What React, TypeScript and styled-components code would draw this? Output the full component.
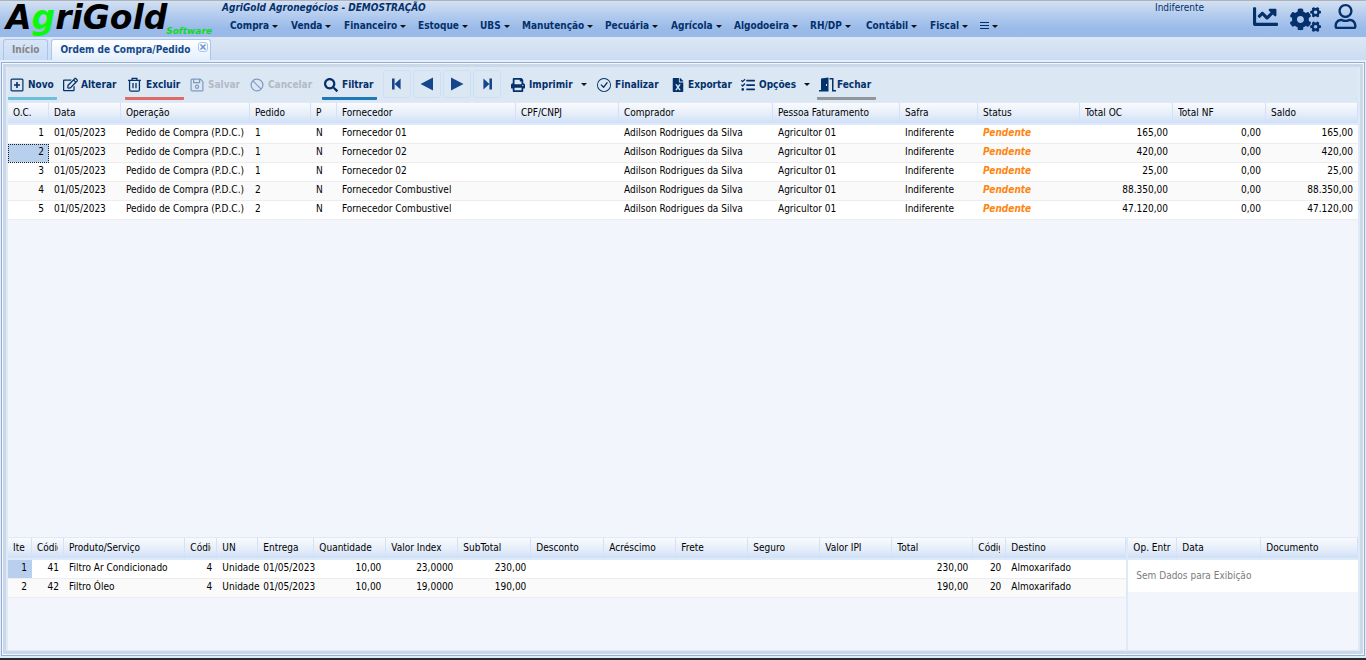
import React from "react";
import styled, { createGlobalStyle, css } from "styled-components";
import { FaChartLine, FaCogs, FaFileExcel, FaPrint, FaRegEdit, FaRegUser, FaSearch, FaTasks } from "react-icons/fa";
import { BsCheckCircle } from "react-icons/bs";

const navy = "#04306b";

const GlobalStyle = createGlobalStyle`
  * { box-sizing: border-box; }
  body {
    margin: 0;
    background: #deecfd;
    color: #000;
    font: 10px/14px "DejaVu Sans Condensed", "DejaVu Sans", Tahoma, sans-serif;
  }
  button { font: inherit; color: inherit; border: 0; padding: 0; background: none; cursor: pointer; }
  a { color: inherit; text-decoration: none; }
`;

const Page = styled.div`
  display: flex;
  flex-direction: column;
  min-height: 100vh;
  border-bottom: 2px solid #2b2b2b;
`;

const Header = styled.header`
  display: flex;
  height: 37px;
  border-top: 1px solid #adb2bd;
  background: linear-gradient(#d3e1f1, #b2cbee 40%, #9abbe9 75%, #99bae8);
  color: ${navy};
`;

const Logo = styled.a`
  position: relative;
  width: 218px;
  padding-left: 6px;
  color: #000;
  font: italic bold 33px/34px "DejaVu Sans", sans-serif;
  em { color: #0cf80c; }
`;

const LogoTag = styled.small`
  position: absolute;
  right: 6px;
  bottom: 1px;
  color: #0cdc1c;
  font-size: 9px;
  line-height: 10px;
`;

const HeaderMain = styled.div`
  flex: 1;
  min-width: 0;
  padding-left: 4px;
`;

const Company = styled.h1`
  margin: 0;
  font-size: 10px;
  line-height: 13px;
  font-style: italic;
`;

const Menu = styled.nav`
  display: flex;
  padding: 5px 0 0 8px;
  white-space: nowrap;
`;

const MenuItem = styled.button<{ $w: number }>`
  display: flex;
  align-items: center;
  gap: 3px;
  width: ${(p) => p.$w}px;
  font-weight: bold;
`;

const Caret = styled.i`
  border: solid transparent;
  border-width: 3px 3px 0;
  border-top-color: #111;
`;

const Season = styled.span`
  width: 98px;
  line-height: 13px;
`;

const HeaderIcons = styled.div`
  display: flex;
  align-items: flex-start;
  gap: 12px;
  padding: 3px 8px 0 0;
`;

const IconButton = styled.button`
  display: flex;
  svg { display: block; }
`;

const TabBar = styled.nav`
  display: flex;
  align-items: flex-end;
  gap: 3px;
  height: 25px;
  padding: 2px 3px 0;
  background: linear-gradient(#dce7f4, #cbdcf2);
  border-bottom: 2px solid #e2effe;
`;

const Tab = styled.a<{ $active?: boolean }>`
  display: flex;
  align-items: center;
  gap: 8px;
  height: 21px;
  padding: 0 8px;
  border: 1px solid #a9c5ee;
  border-bottom: 0;
  border-radius: 3px 3px 0 0;
  background: linear-gradient(#d9e6f7, #c9dcf6);
  color: #858585;
  font-weight: bold;
  ${(p) => p.$active && css`
    padding: 0 2px 0 8px;
    background: linear-gradient(#fff, #e4effd);
    color: #15498b;
  `}
`;

const TabClose = styled.button`
  align-self: flex-start;
  width: 10px;
  height: 10px;
  margin-top: 2px;
  border: 1px solid #a9c5ee;
  border-radius: 3px;
  svg { display: block; margin: 1px; }
`;

const Frame = styled.main`
  flex: 1;
  display: flex;
  flex-direction: column;
  margin: 0 1px 2px;
  border: 1px solid #97aed0;
  padding: 1px;
  background: #f2f7fe;
`;

const Panel = styled.section`
  flex: 1;
  display: flex;
  flex-direction: column;
  padding: 0 2px 1px;
  border: 3px solid #cbd8e8;
  background: #deeafa;
`;

const Toolbar = styled.div`
  display: flex;
  height: 35px;
  padding-top: 2px;
  background: #dbe7f3;
  color: ${navy};
`;

const Tool = styled.button<{ $w: number; $line?: string; $gap?: number }>`
  display: flex;
  align-items: center;
  gap: ${(p) => p.$gap ?? 4}px;
  width: ${(p) => p.$w}px;
  height: 31px;
  margin-right: 4px;
  padding: 3px 2px 0;
  border-bottom: 3px solid ${(p) => p.$line ?? "transparent"};
  border-radius: 1px;
  font-weight: bold;
  white-space: nowrap;
  svg { flex: none; }
  &:disabled { color: #b2bac4; cursor: default; }
  &:disabled svg { color: #7f9ac2; }
`;

const ToolCaret = styled(Caret)`
  margin-left: 4px;
`;

const NavGroup = styled.div`
  display: flex;
  gap: 2px;
  margin: 1px 8px 0 2px;
`;

const NavButton = styled.button`
  display: grid;
  place-items: center;
  width: 28px;
  height: 28px;
  border: 1px solid #cddff8;
  border-radius: 3px;
  color: #15468b;
`;

const Details = styled.div`
  display: flex;
  height: 113px;
  margin-top: auto;
`;

const Items = styled.div`
  flex: 1120;
  min-width: 0;
  border-right: 2px solid #deeafa;
  background: #f2f6fc;
`;

const Entries = styled.div`
  flex: 230;
  min-width: 0;
  background: #f2f6fc;
`;

const OrdersArea = styled.div`
  flex: 1;
  min-height: 120px;
  background: #f2f6fc;
`;

const Table = styled.table`
  width: 100%;
  table-layout: fixed;
  border-collapse: separate;
  border-spacing: 0;
`;

const Body = styled.tbody`
  tr { background: #fff; }
  tr:nth-child(even) { background: #fafafa; }
`;

const Th = styled.th`
  height: 23px;
  padding: 0 5px;
  border-right: 1px solid #d3e2f7;
  border-top: 1px solid #deeafa;
  border-bottom: 2px solid #deeafa;
  background: linear-gradient(#f9fafc, #e6eefa 55%, #cfe0f7);
  font-weight: normal;
  line-height: 16px;
  text-align: left;
  white-space: nowrap;
`;

const ThText = styled.span`
  display: block;
  overflow: hidden;
`;

const Td = styled.td<{ $right?: boolean; $selected?: boolean; $focus?: boolean }>`
  height: 19px;
  padding: 0 5px 2px;
  border-bottom: 1px solid #ededed;
  text-align: ${(p) => (p.$right ? "right" : "left")};
  white-space: nowrap;
  ${(p) => p.$selected && css`background: #b8cfee;`}
  ${(p) => p.$focus && css`outline: 1px dotted #222; outline-offset: -1px;`}
`;

const Pending = styled.strong`
  color: #ff8410;
  font-style: italic;
`;

const Empty = styled.p`
  margin: 0;
  padding: 9px 8px;
  background: #fff;
  color: #7c7c7c;
`;

type Column = { label: string; width?: number; right?: boolean };
const col = (label: string, width?: number, right?: boolean): Column => ({ label, width, right });

const orderColumns = [
  col("O.C.", 41, true), col("Data", 72), col("Operação", 129), col("Pedido", 61), col("P", 26),
  col("Fornecedor"), col("CPF/CNPJ", 103), col("Comprador", 154), col("Pessoa Faturamento", 127),
  col("Safra", 78), col("Status", 102), col("Total OC", 93, true), col("Total NF", 93, true), col("Saldo", 92, true),
];

const order = (id: string, pedido: string, supplier: string, total: string) => [
  id, "01/05/2023", "Pedido de Compra (P.D.C.)", pedido, "N", supplier, "", "Adilson Rodrigues da Silva",
  "Agricultor 01", "Indiferente", "Pendente", total, "0,00", total,
];

const orders = [
  order("1", "1", "Fornecedor 01", "165,00"),
  order("2", "1", "Fornecedor 02", "420,00"),
  order("3", "1", "Fornecedor 02", "25,00"),
  order("4", "2", "Fornecedor Combustivel", "88.350,00"),
  order("5", "2", "Fornecedor Combustivel", "47.120,00"),
];

const itemColumns = [
  col("Ite", 24, true), col("Códig", 32, true), col("Produto/Serviço"), col("Códig", 32, true), col("UN", 41),
  col("Entrega", 56), col("Quantidade", 72, true), col("Valor Index", 72, true), col("SubTotal", 73, true),
  col("Desconto", 73), col("Acréscimo", 72), col("Frete", 72), col("Seguro", 72), col("Valor IPI", 72),
  col("Total", 81, true), col("Códig", 33, true), col("Destino", 120),
];

const items = [
  ["1", "41", "Filtro Ar Condicionado", "4", "Unidade", "01/05/2023", "10,00", "23,0000", "230,00", "", "", "", "", "", "230,00", "20", "Almoxarifado"],
  ["2", "42", "Filtro Óleo", "4", "Unidade", "01/05/2023", "10,00", "19,0000", "190,00", "", "", "", "", "", "190,00", "20", "Almoxarifado"],
];

const entryColumns = [col("Op. Entr", 49), col("Data", 84), col("Documento")];

const menus: [string, number][] = [
  ["Compra", 61], ["Venda", 53], ["Financeiro", 74], ["Estoque", 62], ["UBS", 42], ["Manutenção", 83],
  ["Pecuária", 66], ["Agrícola", 63], ["Algodoeira", 76], ["RH/DP", 56], ["Contábil", 64], ["Fiscal", 50],
];

type GridProps = { label: string; columns: Column[]; rows?: string[][]; selected?: number; focus?: boolean };

function Grid({ label, columns, rows = [], selected, focus }: GridProps) {
  return (
    <Table aria-label={label}>
      <colgroup>{columns.map((c, i) => <col key={i} width={c.width} />)}</colgroup>
      <thead>
        <tr>{columns.map((c, i) => <Th key={i} scope="col"><ThText>{c.label}</ThText></Th>)}</tr>
      </thead>
      <Body>
        {rows.map((row, r) => (
          <tr key={r}>
            {row.map((value, i) => {
              const on = r === selected && i === 0;
              return (
                <Td key={i} $right={columns[i].right} $selected={on} $focus={on && focus}>
                  {value === "Pendente" ? <Pending>{value}</Pending> : value}
                </Td>
              );
            })}
          </tr>
        ))}
      </Body>
    </Table>
  );
}

const Line = ({ size = 14, children }: { size?: number; children: React.ReactNode }) => (
  <svg width={size} height={size} viewBox="0 0 14 14" fill="none" stroke="currentColor" strokeWidth="1.2" aria-hidden>{children}</svg>
);

const PlusIcon = () => <Line><rect x="1.1" y="1.1" width="11.8" height="11.8" rx="1" /><path d="M7 4v6M4 7h6" strokeWidth="1.6" /></Line>;
const TrashIcon = () => <Line size={15}><path d="M1 3.2h12M4.8 3V1.2h4.4V3M2.4 3.4v8.4c0 .9.5 1.4 1.4 1.4h6.4c.9 0 1.4-.5 1.4-1.4V3.4M5.6 5.6v5M8.4 5.6v5" /></Line>;
const SaveIcon = () => <Line><path d="M2 1.1h8.3l2.6 2.6V12a.9.9 0 0 1-.9.9H2a.9.9 0 0 1-.9-.9V2A.9.9 0 0 1 2 1.1ZM3.6 1.3v3.4h6V1.3" /><circle cx="7" cy="8.8" r="1.6" /></Line>;
const BanIcon = () => <Line><circle cx="7" cy="7" r="5.9" /><path d="m2.9 2.9 8.2 8.2" /></Line>;

const Solid = ({ d }: { d: string }) => (
  <svg width="14" height="14" viewBox="0 0 14 14" fill="currentColor" aria-hidden><path d={d} /></svg>
);

const DoorIcon = () => (
  <svg width="17" height="15" viewBox="0 0 17 15" fill="currentColor" aria-hidden>
    <path fillRule="evenodd" d="M2 1.5 9.500.5v14H0v-1.500h2ZM7 7v2h1V7Z" />
    <path d="M10.500 1h4v12H17v1.500h-4v-12h-2.500Z" />
  </svg>
);

export default function App() {
  return (
    <>
      <GlobalStyle />
      <Page>
        <Header>
          <Logo href="#">
            A<em>g</em>riGold
            <LogoTag>Software</LogoTag>
          </Logo>
          <HeaderMain>
            <Company>AgriGold Agronegócios - DEMOSTRAÇÃO</Company>
            <Menu>
              {menus.map(([name, w]) => <MenuItem key={name} $w={w}>{name}<Caret /></MenuItem>)}
              <MenuItem $w={20} aria-label="Mais">
                <svg width="9" height="8" viewBox="0 0 9 8" stroke="currentColor" aria-hidden><path d="M0 .5h9M0 3.5h9M0 6.5h9" /></svg>
                <Caret />
              </MenuItem>
            </Menu>
          </HeaderMain>
          <Season>Indiferente</Season>
          <HeaderIcons>
            <IconButton aria-label="Gráficos"><FaChartLine size={25} /></IconButton>
            <IconButton aria-label="Configurações"><FaCogs size={31} height={25} /></IconButton>
            <IconButton aria-label="Usuário"><FaRegUser size={25} /></IconButton>
          </HeaderIcons>
        </Header>

        <TabBar>
          <Tab href="#">Início</Tab>
          <Tab href="#" $active>
            Ordem de Compra/Pedido
            <TabClose aria-label="Fechar aba">
              <svg width="6" height="6" viewBox="0 0 6 6" stroke="#6d93c8" strokeWidth="1.5" aria-hidden><path d="m.5.5 5 5M5.5.5l-5 5" /></svg>
            </TabClose>
          </Tab>
        </TabBar>

        <Frame>
          <Panel>
            <Toolbar>
              <Tool $w={49} $line="#6cc0da"><PlusIcon />Novo</Tool>
              <Tool $w={60} $gap={3}><FaRegEdit size={15} />Alterar</Tool>
              <Tool $w={59} $line="#dc6a66"><TrashIcon />Excluir</Tool>
              <Tool $w={56} disabled><SaveIcon />Salvar</Tool>
              <Tool $w={70} disabled><BanIcon />Cancelar</Tool>
              <Tool $w={55} $line="#2078b4"><FaSearch size={14} />Filtrar</Tool>
              <NavGroup>
                <NavButton aria-label="Primeiro"><Solid d="M2 1.5h2.6V7l6-5.5v11L4.6 7v5.5H2Z" /></NavButton>
                <NavButton aria-label="Anterior"><Solid d="M.5 7 13 .5v13Z" /></NavButton>
                <NavButton aria-label="Próximo"><Solid d="M13.5 7 1 .5v13Z" /></NavButton>
                <NavButton aria-label="Último"><Solid d="M12 1.5H9.4V7l-6-5.5v11L9.4 7v5.5H12Z" /></NavButton>
              </NavGroup>
              <Tool $w={82}><FaPrint size={14} />Imprimir<ToolCaret /></Tool>
              <Tool $w={70}><BsCheckCircle size={14} />Finalizar</Tool>
              <Tool $w={66} $gap={3}><FaFileExcel size={14} />Exportar</Tool>
              <Tool $w={74}><FaTasks size={14} />Opções<ToolCaret /></Tool>
              <Tool $w={59} $line="#92959b" $gap={1}><DoorIcon />Fechar</Tool>
            </Toolbar>
            <OrdersArea>
              <Grid label="Ordens de compra" columns={orderColumns} rows={orders} selected={1} focus />
            </OrdersArea>
            <Details>
              <Items><Grid label="Itens" columns={itemColumns} rows={items} selected={0} /></Items>
              <Entries>
                <Grid label="Entradas" columns={entryColumns} />
                <Empty>Sem Dados para Exibição</Empty>
              </Entries>
            </Details>
          </Panel>
        </Frame>
      </Page>
    </>
  );
}
